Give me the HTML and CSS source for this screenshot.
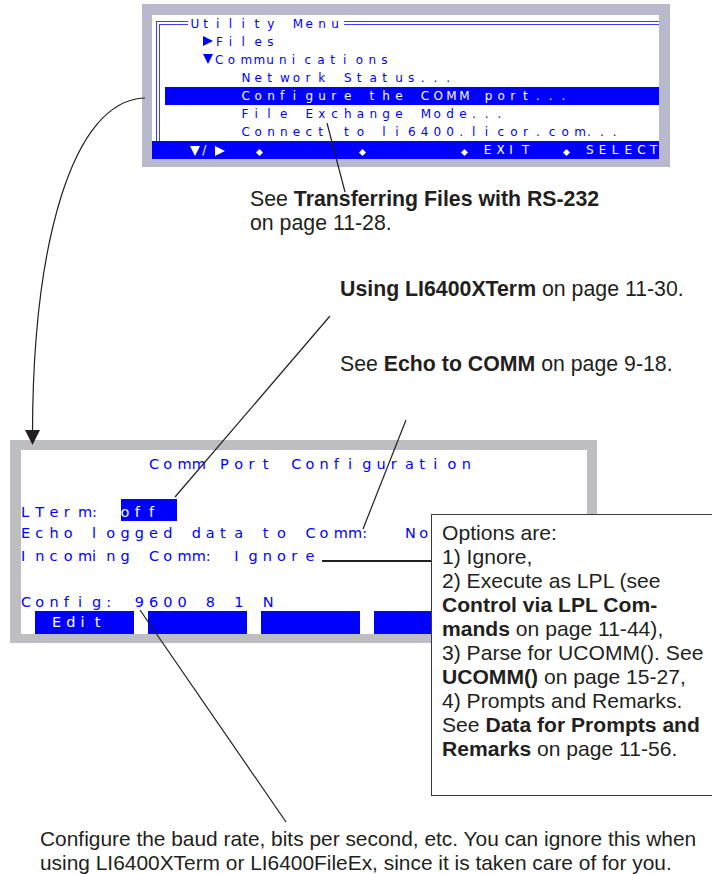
FILE: index.html
```html
<!DOCTYPE html>
<html lang="en">
<head>
  <meta charset="UTF-8">
  <title>Comm Port Configuration</title>
  <link rel="stylesheet" href="styles.css">
</head>
<body>
  <div class="page">
    <!-- Utility Menu screen -->
    <div class="lcd lcd-menu">
      <div class="screen">
        <div class="menu">
          <div class="row">   <span class="ttl">Utility Menu</span></div>
          <div class="row">    <i class="tri-r"></i>Files</div>
          <div class="row">    <i class="tri-d"></i>Communications</div>
          <div class="row">       Network Status...</div>
          <div class="row sel">      Configure the COMM port...</div>
          <div class="row">       File Exchange Mode...</div>
          <div class="row">       Connect to li6400.licor.com...</div>
        </div>
        <div class="row keys">   <i class="tri-d"></i>/<i class="tri-r"></i>  <i class="dia"></i>       <i class="dia"></i>       <i class="dia"></i> EXIT  <i class="dia"></i> SELECT</div>
      </div>
    </div>

    <p class="note note-files">See <b>Transferring Files with RS-232</b><br>on page 11-28.</p>
    <p class="note note-term"><b>Using LI6400XTerm</b> on page 11-30.</p>
    <p class="note note-echo">See <b>Echo to COMM</b> on page 9-18.</p>

    <!-- Comm Port Configuration screen -->
    <div class="lcd lcd-comm">
      <div class="screen">
        <div class="row">         Comm Port Configuration</div>
        <div class="row"></div>
        <div class="row">LTerm: <span class="hl">off </span></div>
        <div class="row">Echo logged data to Comm:  No</div>
        <div class="row">Incoming Comm: Ignore</div>
        <div class="row"></div>
        <div class="row">Config: 9600 8 1 N</div>
        <div class="softkeys">
          <div class="key">Edit</div>
          <div class="key"></div>
          <div class="key"></div>
          <div class="key"></div>
          <div class="key"></div>
        </div>
      </div>
    </div>

    <div class="callout">
      Options are:<br>
      1) Ignore,<br>
      2) Execute as LPL (see<br>
      <b>Control via LPL Com-</b><br>
      <b>mands</b> on page 11-44),<br>
      3) Parse for UCOMM(). See<br>
      <b>UCOMM()</b> on page 15-27,<br>
      4) Prompts and Remarks.<br>
      See <b>Data for Prompts and</b><br>
      <b>Remarks</b> on page 11-56.
    </div>

    <p class="note note-config">Configure the baud rate, bits per second, etc. You can ignore this when<br>using LI6400XTerm or LI6400FileEx, since it is taken care of for you.</p>

    <!-- leader lines -->
    <svg class="leaders" width="712" height="874" viewBox="0 0 712 874">
      <path d="M145,94 C72,96 33,240 32.5,428"/>
      <polygon points="25,426 40,426 32.5,441"/>
      <path d="M327,119 L345,188"/>
      <path d="M175,493 L330,312"/>
      <path d="M363,525 L406,416"/>
      <path class="thick" d="M322,557 L431,557"/>
      <path d="M140,606 L286,818"/>
    </svg>
  </div>
  <script src="script.js"></script>
</body>
</html>
```

FILE: styles.css
```css
html, body {
  margin: 0;
  overflow: hidden;
}
body {
  font-family: "Liberation Sans", Arial, sans-serif;
  color: #231f20;
  background: #fff;
}
.page {
  position: relative;
  width: 712px;
  height: 874px;
}

/* LCD screens */
.lcd {
  background: #bebec2;
}
.screen {
  background: #fff;
  color: #0000ff;
  font-family: "DejaVu Sans", sans-serif;
}
.screen .row,
.screen .key {
  white-space: pre;
}
.screen i {
  font-style: normal;
}
/* one character cell of the display */
.ch {
  display: inline-block;
  width: 12.8px;
}
.lcd-menu {
  width: 507px;
  margin: 4px 0 0 142px;
  padding: 11px 11px 8px 10px;
  background: #b9b9cd;
}
.lcd-menu .screen {
  font-size: 12px;
}
.lcd-menu .row {
  height: 18px;
  line-height: 18px;
}
.menu {
  position: relative;
}
.menu::before {
  content: "";
  position: absolute;
  left: 4px;
  top: 6px;
  right: 0;
  bottom: 0;
  border-left: 4px double #3c3cff;
  border-top: 4px double #3c3cff;
}
.ttl {
  position: relative;
  background: #fff;
  padding-left: 2px;
  margin-left: -2px;
}
.sel {
  margin-left: 12.8px;
  background: #0000ff;
  color: #fff;
}
.keys {
  background: #0000ff;
  color: #fff;
}
.tri-r {
  display: inline-block;
  width: 0;
  height: 0;
  border-left: 10px solid currentColor;
  border-top: 5px solid transparent;
  border-bottom: 5px solid transparent;
  margin-right: 2.8px;
}
.tri-d {
  display: inline-block;
  width: 0;
  height: 0;
  border-top: 10px solid currentColor;
  border-left: 5.5px solid transparent;
  border-right: 5.5px solid transparent;
  margin-right: 1.8px;
}
.keys .tri-r,
.keys .tri-d {
  vertical-align: -2px;
}
.dia {
  display: inline-block;
  width: 5px;
  height: 5px;
  margin: 0 3.9px;
  background: #fff;
  transform: rotate(45deg);
  vertical-align: -1px;
}

.lcd-comm {
  width: 566px;
  margin: 64px 0 0 10px;
  padding: 10px 10px 9px 11px;
}
.lcd-comm .screen {
  font-size: 14.5px;
}
.lcd-comm .ch {
  width: 14.23px;
}
.lcd-comm .row {
  height: 23px;
  line-height: 23px;
  padding-top: 3px;
  box-sizing: border-box;
}
.hl {
  display: inline-block;
  line-height: 17px;
  padding-top: 5px;
  background: #0000ff;
  color: #fff;
}
.softkeys {
  display: flex;
  gap: 14px;
  padding-left: 14px;
}
.key {
  width: 99px;
  height: 23px;
  line-height: 23px;
  padding-left: 17px;
  box-sizing: border-box;
  background: #0000ff;
  color: #fff;
}

/* annotations */
.note {
  margin: 0;
  font-size: 21.3px;
  line-height: 24px;
  white-space: nowrap;
}
.note-files {
  margin: 20px 0 0 250px;
}
.note-term {
  margin: 42px 0 0 340px;
}
.note-echo {
  margin: 51px 0 0 340px;
}
.note-config {
  margin: 184px 0 0 40px;
  font-size: 20.9px;
}
.callout {
  position: absolute;
  left: 431px;
  top: 510px;
  width: 300px;
  padding: 6px 0 34px 10px;
  border: 1.5px solid #3a3a3a;
  border-right: none;
  background: #fff;
  font-size: 21.1px;
  line-height: 24px;
  white-space: nowrap;
}
.leaders {
  position: absolute;
  left: 0;
  top: 0;
  pointer-events: none;
}
.leaders path {
  fill: none;
  stroke: #231f20;
  stroke-width: 1.2;
}
.leaders .thick {
  stroke-width: 2.2;
}
.leaders polygon {
  fill: #231f20;
}
```

FILE: script.js
```js
// lay the display text out in fixed character cells, like the instrument LCD
document.querySelectorAll(".screen .row, .screen .key").forEach(function (row) {
  var walker = document.createTreeWalker(row, NodeFilter.SHOW_TEXT);
  var nodes = [];
  while (walker.nextNode()) nodes.push(walker.currentNode);

  nodes.forEach(function (node) {
    var frag = document.createDocumentFragment();
    for (var i = 0; i < node.data.length; i++) {
      var cell = document.createElement("span");
      cell.className = "ch";
      cell.textContent = node.data[i];
      frag.appendChild(cell);
    }
    node.parentNode.replaceChild(frag, node);
  });
});
```
